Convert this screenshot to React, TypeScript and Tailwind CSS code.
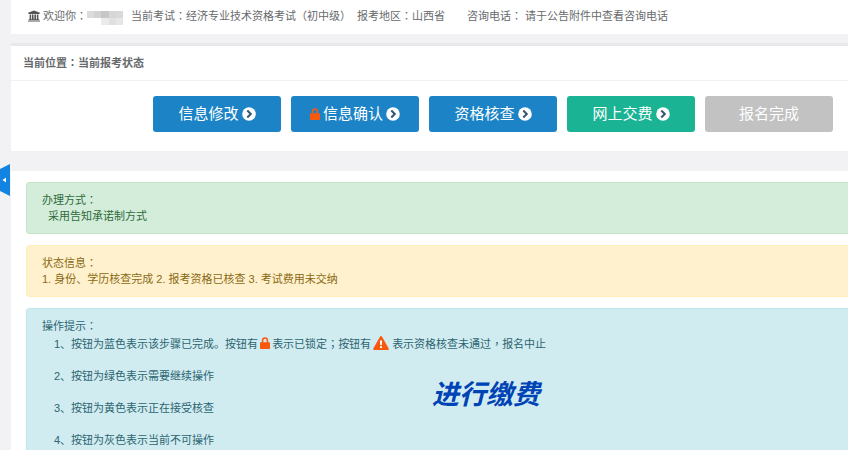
import React from 'react';

interface Step {
  label: string;
  tone: 'done' | 'next' | 'disabled';
  locked?: boolean;
}

const steps: Step[] = [
  { label: '信息修改', tone: 'done' },
  { label: '信息确认', tone: 'done', locked: true },
  { label: '资格核查', tone: 'done' },
  { label: '网上交费', tone: 'next' },
  { label: '报名完成', tone: 'disabled' },
];

const toneClass = {
  done: 'bg-[#1c84c6]',
  next: 'bg-[#1ab394]',
  disabled: 'bg-[#c2c2c2]',
};

// Hidden applicant name
const mosaic = [
  'bg-[#dcdcdc]', 'bg-[#d2d2d2]', 'bg-[#c6c6c6]', 'bg-[#d6d6d6]', 'bg-[#d9d9d9]',
  'bg-white', 'bg-white', 'bg-[#ebebeb]', 'bg-[#e0e0e0]', 'bg-[#e6e6e6]',
];

function BankIcon() {
  return (
    <svg viewBox="0 0 1920 1792" className="mr-[3px] h-3 w-3 text-[#555]" fill="currentColor">
      <path d="M960 0l960 384v128h-128q0 26-20.5 45t-48.5 19h-1526q-28 0-48.5-19t-20.5-45h-128v-128zM256 640h256v768h128v-768h256v768h128v-768h256v768h128v-768h256v768h59q28 0 48.5 19t20.5 45v64h-1664v-64q0-26 20.5-45t48.5-19h59zM1851 1600q28 0 48.5 19t20.5 45v128h-1920v-128q0-26 20.5-45t48.5-19z" />
    </svg>
  );
}

function LockIcon({ className = '' }: { className?: string }) {
  return (
    <svg viewBox="0 0 10 12" className={`h-3 w-2.5 text-[#f8590c] ${className}`}>
      <path d="M2.6 6V3.4a2.4 2.4 0 0 1 4.8 0V6" fill="none" stroke="currentColor" strokeWidth="1.5" />
      <rect y="5.2" width="10" height="6.8" rx="0.7" fill="currentColor" />
    </svg>
  );
}

function WarningIcon() {
  return (
    <svg viewBox="0 0 16 14" className="mr-[3px] mb-0.5 ml-0.5 h-3.5 w-4">
      <path d="M7.1.6a1 1 0 0 1 1.8 0l6.8 11.8a1 1 0 0 1-.9 1.5H1.2a1 1 0 0 1-.9-1.5Z" fill="#f8590c" />
      <path d="M6.9 4.5h2.2l-.3 4.7H7.2ZM7 10.2h2v1.9H7Z" fill="#fff" />
    </svg>
  );
}

function ArrowIcon() {
  return (
    <svg viewBox="0 0 14 14" className="h-3.5 w-3.5">
      <circle cx="7" cy="7" r="6.8" fill="#fff" />
      <path d="M5.3 3.5 8.8 7l-3.5 3.5" fill="none" stroke="#34566f" strokeWidth="2" />
    </svg>
  );
}

// Full-width punctuation centred in its cell
function Mark({ children }: { children: string }) {
  return <span className="font-['Noto_Sans_CJK_TC',sans-serif] leading-none">{children}</span>;
}

function StepButton({ step }: { step: Step }) {
  return (
    <button
      type="button"
      disabled={step.tone === 'disabled'}
      className={`flex h-9 w-32 items-center justify-center gap-[3px] rounded-[3px] text-[15px] text-white ${toneClass[step.tone]}`}
    >
      {step.locked && <LockIcon />}
      <span>{step.label}</span>
      {step.tone !== 'disabled' && <ArrowIcon />}
    </button>
  );
}

export default function App() {
  return (
    <div className="relative flex min-h-screen overflow-hidden bg-[#f2f2f4] font-['Liberation_Sans','Noto_Sans_CJK_SC',sans-serif] text-[11px] leading-4 text-[#676a6c]">
      {/* Sidebar toggle */}
      <aside className="flex w-[11px] shrink-0 flex-col pt-[164px]">
        <button type="button" aria-label="展开菜单" className="h-8 w-[10px]">
          <svg viewBox="0 0 10 32" className="h-8 w-[10px]">
            <path d="M0 5 10 0V32L0 27Z" fill="#1283e0" />
            <path d="M2.5 16 6 13.5V18.5Z" fill="#fff" />
          </svg>
        </button>
      </aside>

      <main className="flex min-w-0 flex-1 flex-col">
        <header className="flex h-[34px] shrink-0 items-center whitespace-nowrap bg-white pb-0.5 pl-[17px]">
          <BankIcon />
          <span>欢迎你<Mark>：</Mark></span>
          <span className="mt-1 grid w-9 grid-cols-5">
            {mosaic.map((color, i) => (
              <span key={i} className={`h-[7px] ${color}`} />
            ))}
          </span>
          <span className="ml-2">当前考试<Mark>：</Mark>经济专业技术资格考试（初中级）</span>
          <span className="ml-1.5">报考地区<Mark>：</Mark>山西省</span>
          <span className="ml-[22px]">咨询电话<Mark>：</Mark> 请于公告附件中查看咨询电话</span>
        </header>

        <section className="mt-[9px] border-t-[3px] border-[#e7e8ea] bg-white">
          <h1 className="border-b border-[#f2f2f2] py-[9px] pl-3 font-bold">当前位置<Mark>：</Mark>当前报考状态</h1>
          <div className="flex justify-end gap-2.5 pt-[15px] pr-[15px] pb-[19px]">
            {steps.map((step) => (
              <StepButton key={step.label} step={step} />
            ))}
          </div>
        </section>

        <section className="mt-5 flex flex-1 flex-col gap-[11px] bg-white pt-[11px] pl-[15px]">
          <div className="rounded-l border border-r-0 border-[#c3e6cb] bg-[#d4edda] py-[9px] pl-[15px] text-[#2f6b3c]">
            <p>办理方式<Mark>：</Mark></p>
            <p className="pl-1.5">采用告知承诺制方式</p>
          </div>

          <div className="rounded-l border border-r-0 border-[#ffeeba] bg-[#fff1cd] py-[9px] pl-[15px] text-[#8a6a14]">
            <p>状态信息<Mark>：</Mark></p>
            <p>1. 身份、学历核查完成 2. 报考资格已核查 3. 考试费用未交纳</p>
          </div>

          <div className="relative flex-1 rounded-tl border-t border-l border-[#bee5eb] bg-[#d1ecf1] pt-[9px] pl-[15px] text-[#2c6570]">
            <p>操作提示<Mark>：</Mark></p>
            <ol className="flex flex-col gap-3 pl-3 leading-5">
              <li className="flex items-center whitespace-nowrap">
                <span>1、按钮为蓝色表示该步骤已完成。按钮有</span>
                <LockIcon className="mx-0.5 mb-0.5" />
                <span>表示已锁定<Mark>；</Mark>按钮有</span>
                <WarningIcon />
                <span>表示资格核查未通过<Mark>，</Mark>报名中止</span>
              </li>
              <li>2、按钮为绿色表示需要继续操作</li>
              <li>3、按钮为黄色表示正在接受核查</li>
              <li>4、按钮为灰色表示当前不可操作</li>
            </ol>
            {/* Note floating over the tips */}
            <strong className="absolute top-[70px] left-[405px] text-[27px] leading-8 font-bold text-[#0043b5] italic">
              进行缴费
            </strong>
          </div>
        </section>
      </main>
    </div>
  );
}
